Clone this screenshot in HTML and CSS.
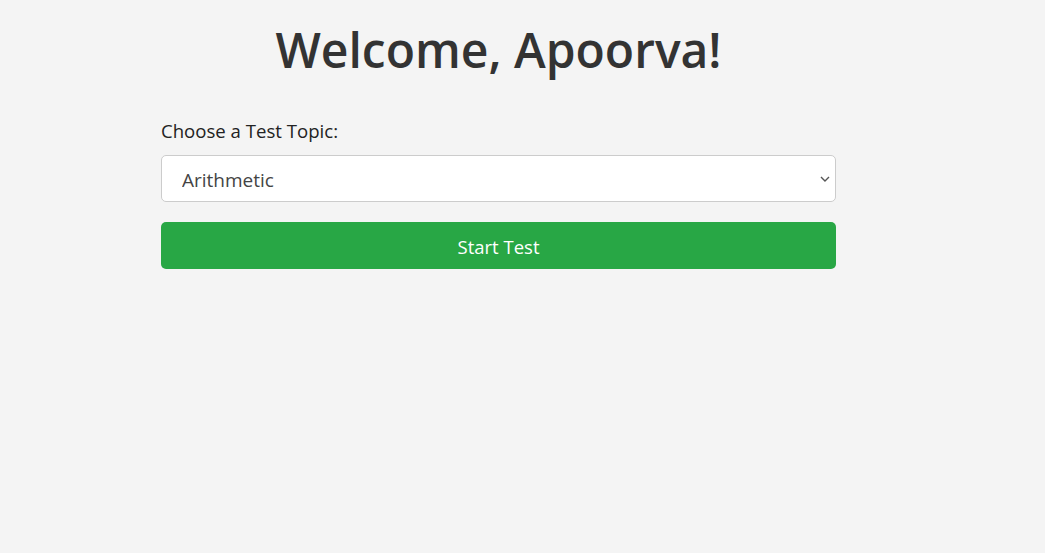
FILE: index.html
```html
<!DOCTYPE html>
<html lang="en">
<head>
<meta charset="utf-8">
<title>Welcome</title>
<link rel="stylesheet" href="styles.css">
</head>
<body>
<div class="page">
  <div class="container">
    <h1 class="title">Welcome, Apoorva!</h1>
    <form class="form">
      <label class="label" for="topic">Choose a Test Topic:</label>
      <div class="select-wrap">
        <select id="topic" class="select">
          <option>Arithmetic</option>
        </select>
        <svg class="chev" width="10" height="6" viewBox="0 0 10 6"><path d="M1 1l4 4 4-4" fill="none" stroke="#555" stroke-width="1.4"/></svg>
      </div>
      <button type="button" class="btn">Start Test</button>
    </form>
  </div>
</div>
</body>
</html>
```

FILE: styles.css
```css
* { box-sizing: border-box; }
html, body { margin: 0; padding: 0; }
body {
  background: #f4f4f4;
  font-family: "Open Sans", "Noto Sans", sans-serif;
  color: #333;
}
.page {
  width: 997px;
  padding-top: 18px;
}
.container {
  width: 675px;
  margin: 0 auto;
}
.title {
  margin: 0;
  text-align: center;
  font-size: 48px;
  font-weight: 600;
  line-height: 64px;
  color: #333;
}
.form {
  display: flex;
  flex-direction: column;
  margin-top: 35px;
}
.label {
  font-size: 18.6px;
  line-height: 28px;
  color: #222;
  margin-bottom: 10px;
}
.select-wrap { position: relative; }
.select {
  width: 100%;
  height: 47px;
  appearance: none;
  -webkit-appearance: none;
  background: #fff;
  border: 1px solid #ccc;
  border-radius: 5px;
  padding: 2px 20px 0;
  font-family: inherit;
  font-size: 19px;
  color: #444;
}
.chev {
  position: absolute;
  right: 6px;
  top: 21px;
}
.btn {
  margin-top: 20px;
  height: 47px;
  padding-top: 2px;
  background: #28a745;
  border: none;
  border-radius: 5px;
  color: #fff;
  font-family: inherit;
  font-size: 18.5px;
}
```
